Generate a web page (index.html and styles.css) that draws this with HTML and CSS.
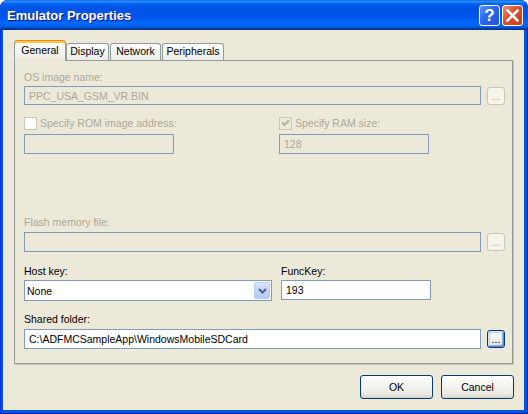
FILE: index.html
```html
<!DOCTYPE html>
<html>
<head>
<meta charset="utf-8">
<link rel="stylesheet" href="styles.css">
</head>
<body>
<div class="window">
  <div class="titlebar">
    <span class="title">Emulator Properties</span>
    <span class="tbtn help">?</span>
    <span class="tbtn close"><svg width="13" height="13" viewBox="0 0 13 13"><path d="M1.5 1.5 L11.5 11.5 M11.5 1.5 L1.5 11.5" stroke="#fff" stroke-width="2.6" stroke-linecap="square" fill="none"/></svg></span>
  </div>
  <div class="client">
    <div class="tabs">
      <div class="tab active t-general">General</div>
      <div class="tab t-display">Display</div>
      <div class="tab t-network">Network</div>
      <div class="tab t-periph">Peripherals</div>
    </div>
    <div class="panel">
      <div class="label dis">OS image name:</div>
      <div class="row r-os">
        <div class="tb dis wide h19">PPC_USA_GSM_VR.BIN</div>
        <div class="dots dis">...</div>
      </div>
      <div class="row r-checks">
        <div class="check col-a"><span class="box"></span><span class="dis">Specify ROM image address:</span></div>
        <div class="check"><span class="box checked"><svg width="9" height="9" viewBox="0 0 9 9"><path d="M1 3.5 L3.5 6 L8 1.5" stroke="#B5B2A3" stroke-width="2" fill="none"/></svg></span><span class="dis">Specify RAM size:</span></div>
      </div>
      <div class="row r-sizes">
        <div class="tb dis w150 col-a-box"></div>
        <div class="tb dis w150">128</div>
      </div>
      <div class="label dis l-flash">Flash memory file:</div>
      <div class="row r-flash">
        <div class="tb dis wide"></div>
        <div class="dots dis">...</div>
      </div>
      <div class="row r-hostlabels">
        <div class="label col-b">Host key:</div>
        <div class="label">FuncKey:</div>
      </div>
      <div class="row r-host">
        <div class="combo">
          <span class="combo-text">None</span>
          <span class="combo-btn"><svg width="9" height="6" viewBox="0 0 9 6"><path d="M1 1 L4.5 4.5 L8 1" stroke="#4D6185" stroke-width="2" fill="none"/></svg></span>
        </div>
        <div class="tb w150 func">193</div>
      </div>
      <div class="label l-shared">Shared folder:</div>
      <div class="row r-shared">
        <div class="tb wide">C:\ADFMCSampleApp\WindowsMobileSDCard</div>
        <div class="dots focus">...</div>
      </div>
    </div>
    <div class="buttons">
      <div class="btn">OK</div>
      <div class="btn">Cancel</div>
    </div>
  </div>
</div>
</body>
</html>
```
FILE: styles.css
```css
* { box-sizing: border-box; }
html, body { margin: 0; padding: 0; }
body {
  width: 528px; height: 414px; overflow: hidden; background: #fff;
  font-family: "Liberation Sans", Arial, sans-serif; font-size: 10.5px; color: #000;
}
.window {
  width: 528px; height: 414px; display: flex; flex-direction: column;
  background: #0054E3; border-radius: 8px 8px 0 0; overflow: hidden;
  box-shadow: inset 1px 0 0 #0831D9, inset -1px 0 0 #001EA0, inset 0 -1px 0 #001EA0;
}
.titlebar {
  height: 30px; flex: none; display: flex; align-items: flex-start;
  padding: 0 5px 0 7px; border-radius: 8px 8px 0 0;
  background: linear-gradient(to bottom, #0058EE 0%, #3593FF 4%, #288EFF 6%, #127DFF 8%, #036FFC 10%, #0262EE 14%, #0057E5 20%, #0054E3 24%, #0055EB 56%, #005BF5 66%, #026AFE 76%, #0062EF 86%, #0052D6 92%, #0040AB 94%, #003092 100%);
}
.title {
  flex: 1; margin-top: 8px; line-height: 15px;
  font-weight: bold; font-size: 13px; color: #fff; text-shadow: 1px 1px #0F1089;
}
.tbtn {
  width: 21px; height: 21px; margin-top: 5px; border: 1px solid #fff; border-radius: 3px;
  display: flex; align-items: center; justify-content: center;
}
.help {
  margin-right: 2px; color: #fff; font-weight: bold; font-size: 17px; line-height: 19px;
  background: linear-gradient(135deg, #5A93F9 0%, #2D66EE 45%, #1E52DC 100%);
}
.close {
  background: linear-gradient(135deg, #EE8A6B 0%, #DE4E2B 45%, #C83D18 100%);
}
.client {
  flex: 1; margin: 0 4px 4px 3px; background: #ECE9D8;
  padding: 10px 11px 0 11px; display: flex; flex-direction: column;
}
.tabs { height: 20px; flex: none; display: flex; align-items: flex-end; position: relative; z-index: 1; }
.tab {
  height: 17px; border: 1px solid #919B9C; border-bottom: none; border-radius: 3px 3px 0 0;
  background: linear-gradient(#FFFFFF, #F3F3EF 60%, #ECEBE6);
  text-align: center; line-height: 15px;
}
.tab.active {
  height: 21px; margin-bottom: -1px; padding-top: 2px; line-height: 14px;
  border-top: 1px solid #E68B2C; box-shadow: inset 0 2px 0 #FFC73C;
  background: linear-gradient(#FCFCFE, #F4F3EE 60%, #ECE9D8);
}
.t-general { width: 52px; }
.t-display { width: 43px; }
.t-network { width: 51px; margin-left: 1px; }
.t-periph { width: 62px; margin-left: 1px; }
.panel {
  height: 304px; flex: none; border: 1px solid #919B9C; background: #ECE9D8;
  box-shadow: 1px 1px 0 #C9C6B6; padding: 10px 0 0 9px;
  display: flex; flex-direction: column;
}
.label { height: 13px; line-height: 13px; white-space: nowrap; }
.dis { color: #ACA899; }
.row { display: flex; align-items: center; flex: none; }
.r-os { margin-top: 2px; }
.r-checks { margin-top: 12px; height: 13px; }
.r-sizes { margin-top: 4px; }
.l-flash { margin-top: 62px; }
.r-flash { margin-top: 3px; }
.r-hostlabels { margin-top: 13px; }
.r-host { margin-top: 2px; align-items: flex-start; }
.l-shared { margin-top: 12px; }
.r-shared { margin-top: 3px; }
.col-a { width: 255px; }
.col-a-box { margin-right: 105px; }
.col-b { width: 257px; }
.tb {
  height: 20px; border: 1px solid #7F9DB9; background: #fff; padding: 0 4px;
  display: flex; align-items: center; white-space: nowrap;
}
.tb.dis { background: #ECE9D8; }
.h19 { height: 19px; }
.wide { width: 457px; }
.w150 { width: 150px; }
.dots {
  width: 18px; height: 18px; margin-left: 6px; border: 1px solid #C9C7BA; border-radius: 3px;
  background: #F5F4EA; text-align: center; line-height: 16px;
}
.dots.focus {
  border-color: #003C74; color: #000;
  background: linear-gradient(#FFFFFF, #F0F0EA 60%, #E5E4DA);
  box-shadow: inset 1px 1px 0 #CEE7FF, inset -1px -1px 0 #6982EE, inset 2px 2px 0 #BCD4F6, inset -2px -2px 0 #89ADE4;
}
.check { display: flex; align-items: center; height: 13px; line-height: 13px; white-space: nowrap; }
.box {
  width: 13px; height: 13px; border: 1px solid #CAC8BB; background: #fff; margin-right: 3px;
  display: flex; align-items: center; justify-content: center; flex: none;
}
.box.checked { background: #ECE9D8; }
.combo {
  width: 248px; height: 21px; border: 1px solid #7F9DB9; background: #fff;
  display: flex; align-items: center; margin-right: 9px;
}
.combo-text { flex: 1; padding-left: 2px; }
.combo-btn {
  width: 16px; height: 17px; margin-right: 1px; border: 1px solid #B9CCF7; border-radius: 2px;
  background: linear-gradient(#DCE6FD, #C3D4FB 50%, #B5C9F6);
  display: flex; align-items: center; justify-content: center;
}
.buttons { display: flex; justify-content: flex-end; gap: 8px; margin-top: 11px; margin-right: -1px; }
.btn {
  width: 73px; height: 24px; border: 1px solid #003C74; border-radius: 3px;
  background: linear-gradient(#FFFFFF 0%, #F4F4F0 40%, #ECEBE6 80%, #D6D0C5 100%);
  display: flex; align-items: center; justify-content: center;
}
```
